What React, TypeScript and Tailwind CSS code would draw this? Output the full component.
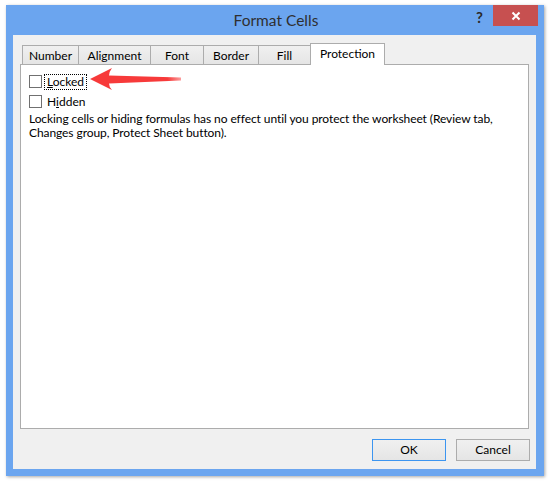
import React from "react";

const font = { fontFamily: 'Lato, "Open Sans", "Liberation Sans", sans-serif' };

function Tab({ label, w, selected }: { label: string; w: string; selected?: boolean }) {
  if (selected) {
    return (
      <div
        className={`relative z-10 -ml-px -mb-px flex h-[22px] ${w} items-start justify-center border border-b-0 border-[#acacac] bg-white pt-[2px] text-[12px] leading-[16px] text-black`}
      >
        {label}
      </div>
    );
  }
  return (
    <div
      className={`-ml-px flex h-[19px] ${w} items-start justify-center border border-b-0 border-[#acacac] bg-gradient-to-b from-[#f0f0f0] to-[#e5e5e5] pt-[2px] text-[12px] leading-[16px] text-black first:ml-0`}
    >
      {label}
    </div>
  );
}

function Checkbox() {
  return <div className="h-[13px] w-[13px] shrink-0 border border-[#707070] bg-white" />;
}

export default function App() {
  return (
    <div className="relative h-[483px] w-[549px] overflow-hidden bg-white pl-[6px] pt-[5px]" style={font}>
      <div className="flex h-[471px] w-[538px] flex-col bg-[#6ba5ef] shadow-[1px_1px_3px_rgba(0,0,0,0.35)]">
        {/* Title bar */}
        <div className="grid h-[30px] grid-cols-[1fr_auto_1fr]">
          <div />
          <div className="flex items-center pl-[2px] pt-[1px] text-[15.5px] text-[#2f2f2f]">Format Cells</div>
          <div className="flex items-start justify-end">
            <div className="mr-[10px] mt-[2px] text-[15px] font-bold leading-[20px] text-[#2a2a2a]">?</div>
            <div className="mr-[6px] flex h-[21px] w-[45px] items-center justify-center bg-[#c75050]">
              <svg width="10" height="10" viewBox="0 0 10 10">
                <path d="M1.5 1.5 L8.5 8.5 M8.5 1.5 L1.5 8.5" stroke="white" strokeWidth="2" />
              </svg>
            </div>
          </div>
        </div>

        {/* Client area */}
        <div className="ml-[7px] mr-[8px] mb-[7px] flex flex-1 flex-col bg-[#f0f0f0] px-[7px] pt-[8px]">
          <div className="flex items-end pl-[2px]">
            <Tab label="Number" w="w-[57px]" />
            <Tab label="Alignment" w="w-[73px]" />
            <Tab label="Font" w="w-[54px]" />
            <Tab label="Border" w="w-[56px]" />
            <Tab label="Fill" w="w-[53px]" />
            <Tab label="Protection" w="w-[75px]" selected />
          </div>
          <div className="h-[365px] border border-[#acacac] bg-white pl-[8px] pt-[6px] text-[12px] text-black">
            <div className="flex h-[20px] items-center pt-[1px]">
              <Checkbox />
              <span className="ml-[2px] border border-dotted border-black px-[2px] leading-[14px]">
                <span className="underline">L</span>ocked
              </span>
            </div>
            <div className="flex h-[20px] items-center pt-[1px]">
              <Checkbox />
              <span className="ml-[2px] border border-transparent px-[2px] leading-[14px]">
                H<span className="underline">i</span>dden
              </span>
            </div>
            <p className="mt-[1px] whitespace-nowrap leading-[14px] tracking-[-0.08px]">
              Locking cells or hiding formulas has no effect until you protect the worksheet (Review tab,
              <br />
              Changes group, Protect Sheet button).
            </p>
          </div>
          <div className="mr-[-1px] mt-[10px] flex justify-end gap-[10px]">
            <button className="h-[22px] w-[74px] border border-[#3c95f0] bg-gradient-to-b from-[#f0f0f0] to-[#e5e5e5] text-[12px] text-black">
              OK
            </button>
            <button className="h-[22px] w-[74px] border border-[#acacac] bg-gradient-to-b from-[#f0f0f0] to-[#e5e5e5] text-[12px] text-black">
              Cancel
            </button>
          </div>
        </div>
      </div>

      {/* Red annotation arrow */}
      <svg className="pointer-events-none absolute left-0 top-0" width="549" height="483" viewBox="0 0 549 483">
        <defs>
          <linearGradient id="tail" x1="0" x2="1" y1="0" y2="0">
            <stop offset="0" stopColor="#f73a3a" />
            <stop offset="0.85" stopColor="#f73a3a" />
            <stop offset="1" stopColor="#f73a3a" stopOpacity="0.5" />
          </linearGradient>
        </defs>
        <path
          d="M90 79 L112 68 Q109 72 109 75.5 L181 77.5 L181 80.5 L109 83.5 Q109 87 112 90 Z"
          fill="url(#tail)"
        />
      </svg>
    </div>
  );
}
